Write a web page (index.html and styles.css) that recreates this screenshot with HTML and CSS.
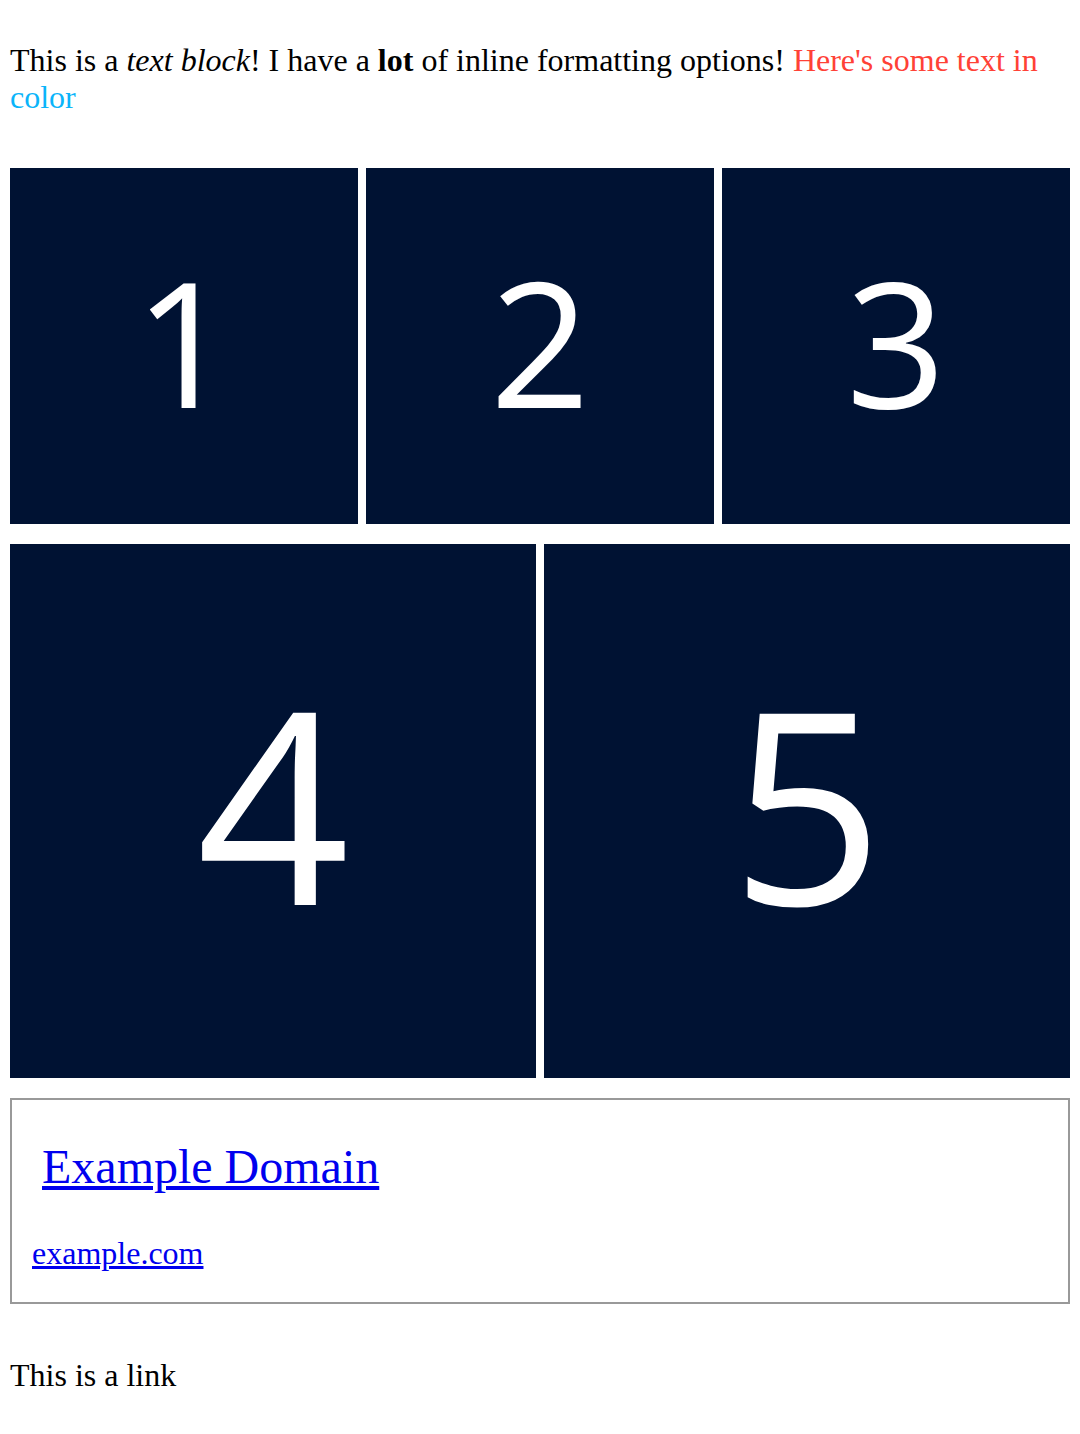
FILE: index.html
```html
<!DOCTYPE html>
<html>
<head>
<meta charset="utf-8">
<link rel="stylesheet" href="styles.css">
</head>
<body>
<main class="page">
  <p class="text-block">This is a <em>text block</em>! I have a <strong>lot</strong> of inline formatting options! <span class="red">Here's some text in</span> <span class="blue">color</span></p>
  <div class="row row-3">
    <div class="tile tile-sm">1</div>
    <div class="tile tile-sm">2</div>
    <div class="tile tile-sm">3</div>
  </div>
  <div class="row row-2">
    <div class="tile tile-lg">4</div>
    <div class="tile tile-lg">5</div>
  </div>
  <div class="card">
    <a class="card-title" href="#">Example Domain</a>
    <a class="card-url" href="#">example.com</a>
  </div>
  <p class="link-text">This is a link</p>
</main>
</body>
</html>
```
FILE: styles.css
```css
html, body {
  margin: 0;
  padding: 0;
  background: #ffffff;
}
.page {
  padding: 0 10px;
  display: flex;
  flex-direction: column;
  gap: 20px;
  font-family: "Liberation Serif", "Times New Roman", serif;
  font-size: 32px;
  color: #000;
}
.text-block {
  margin: 42px 0 32px 0;
  line-height: 37px;
}
.red { color: #ff4136; }
.blue { color: #0ab4fa; }
.row {
  display: grid;
  gap: 8px;
}
.row-3 { grid-template-columns: repeat(3, 1fr); }
.row-2 { grid-template-columns: repeat(2, 1fr); }
.tile {
  background: #001233;
  color: #ffffff;
  font-family: "Open Sans", sans-serif;
  display: flex;
  align-items: center;
  justify-content: center;
  line-height: 1;
  box-sizing: border-box;
}
.tile-sm {
  height: 356px;
  font-size: 175px;
  padding-bottom: 12px;
}
.tile-lg {
  height: 534px;
  font-size: 268px;
  padding-bottom: 18px;
}
.card {
  border: 2px solid #999999;
  padding: 39px 20px 30px 20px;
  display: flex;
  flex-direction: column;
  align-items: flex-start;
  gap: 41px;
}
.card-title {
  font-size: 48px;
  line-height: 55px;
  color: #0000ee;
  margin-left: 10px;
}
.card-url {
  font-size: 32px;
  line-height: 37px;
  color: #0000ee;
}
.link-text {
  margin: 33px 0 0 0;
  line-height: 37px;
}
```
